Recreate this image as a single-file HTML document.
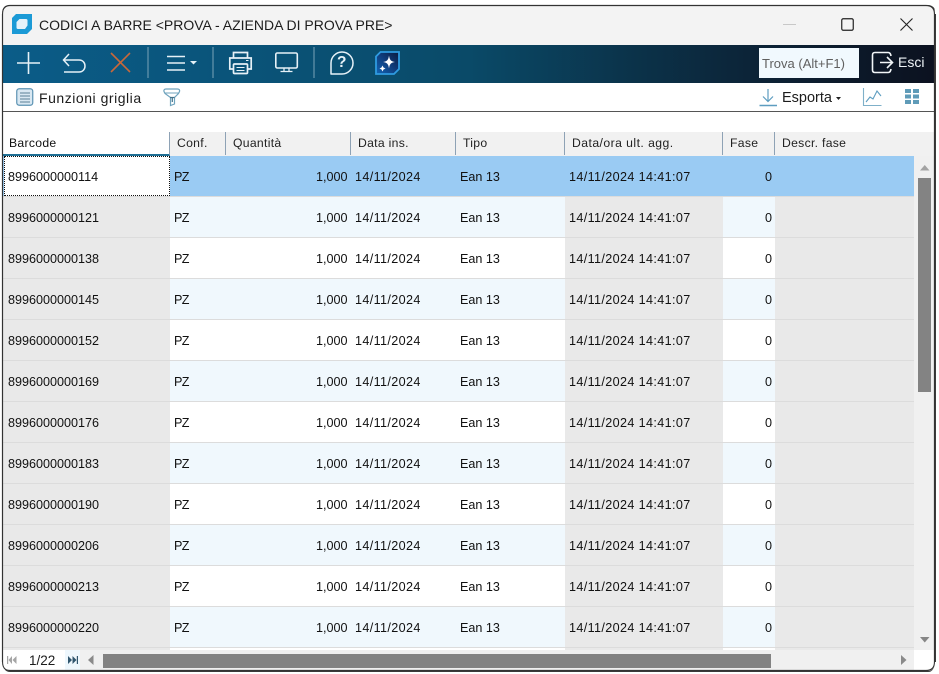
<!DOCTYPE html>
<html><head><meta charset="utf-8">
<style>
html,body{margin:0;padding:0;background:#fff}
body{width:939px;height:674px;position:relative;overflow:hidden;font-family:"Liberation Sans",sans-serif;color:#111}
.a{position:absolute}
#win{position:absolute;left:2px;top:5px;width:932px;height:665px;border:1px solid #3c3c3c;border-radius:8px;overflow:hidden;background:#fff}
.t{position:absolute;white-space:nowrap;font-size:12.6px;line-height:16px}
.r{position:absolute;left:0;width:939px;height:16px;font-size:12.6px;line-height:16px}
.r span{position:absolute;top:0;white-space:nowrap}
.c1{left:8px}.c2{left:174px;letter-spacing:-.7px}.c3{left:316px}.c4{left:355px;letter-spacing:.37px}.c5{left:460px}.c6{left:569px;letter-spacing:.37px}.c7{left:765px}
.h{position:absolute;top:132px;height:23px;background:#f1f1f1;border-right:1px solid #8ea2b5;box-sizing:border-box;font-size:12.2px;line-height:22px;padding-left:7px;color:#222;letter-spacing:.3px}
.tint{position:absolute;height:40px;background:#f0f8fd}
.ln{position:absolute;left:3px;width:911px;height:1px;background:#dcdcdc}
svg{position:absolute;overflow:visible}
</style></head><body>
<div id="win"></div>

<!-- title bar -->
<div class="a" style="left:3px;top:6px;width:931px;height:39px;background:#f3f3f3;border-radius:7px 7px 0 0"></div>
<svg style="left:12px;top:14px" width="20" height="20" viewBox="0 0 20 20"><path d="M4 0H20V15L15 20H0V4Z" fill="#1b9ad6"/><path d="M7.5 5H14Q15.500 5 15.500 6.500V11.500L13 15H6Q4.500 15 4.500 13.500V8Z" fill="#e4f2fa"/></svg>
<div class="t" style="left:39px;top:17px;font-size:14px;color:#1c1c1c">CODICI A BARRE &lt;PROVA - AZIENDA DI PROVA PRE&gt;</div>
<svg style="left:783px;top:24px" width="13" height="1"><rect width="13" height="1" fill="#c8c8c8"/></svg>
<svg style="left:841px;top:18px" width="13" height="13"><rect x=".75" y=".75" width="11.5" height="11.5" rx="1.5" fill="none" stroke="#222" stroke-width="1.2"/></svg>
<svg style="left:900px;top:18px" width="13" height="13"><path d="M.5.5L12.5 12.5M12.5.5L.5 12.5" stroke="#222" stroke-width="1.1" fill="none"/></svg>

<!-- dark toolbar -->
<div class="a" style="left:3px;top:45px;width:931px;height:38px;background:linear-gradient(90deg,#0b5c88 0%,#0a5276 30%,#0a4a68 50%,#0b3249 68%,#0c2438 80%,#0c1828 92%,#0c1220 100%)"></div>
<svg style="left:0;top:0" width="939" height="90" fill="none" stroke="#e6f1f7" stroke-width="1.5">
<path d="M28.500 52V74M17 63H40" stroke-width="1.600"/>
<path d="M69 54L63.500 60L69 66M64 60H79C87 60 87 72 79 72H64"/>
<path d="M111 53L130 72M130 53L111 72" stroke="#c9683a" stroke-width="1.600"/>
<path d="M148 47V78M213 47V78M314 47V78" stroke="#7aa3b8" stroke-width="1"/>
<path d="M167 56.500H185M167 63H185M167 70H185"/>
<path d="M190 61H197L193.500 64.500Z" fill="#e6f1f7" stroke="none"/>
<path d="M233.500 58V52.500H247.500V58M233 69H229.800V58H251.200V69H248" stroke-width="1.700"/>
<rect x="233.500" y="64" width="14" height="9.500" rx="1" stroke-width="1.700"/>
<path d="M236.500 67.500H244.500M236.500 70.500H244.500" stroke-width="1"/>
<path d="M246 60.500H248.500" stroke-width="1"/>
<rect x="275.800" y="53" width="21.500" height="15" rx="1.500" stroke-width="1.600"/>
<path d="M284 68.500V71M289 68.500V71M280.500 71.500H292.500" stroke-width="1.300"/>
<path d="M331 63A11 11 0 1 1 342 74H331Z" stroke-linejoin="round"/>
</svg>
<div class="t" style="left:337px;top:54px;font-size:15.500px;line-height:18px;font-weight:bold;color:#e6f1f7">?</div>
<svg style="left:375px;top:51px" width="25" height="24" viewBox="0 0 25 24"><defs><linearGradient id="g" x1="0" y1="1" x2="1" y2="0"><stop offset="0" stop-color="#1266b8"/><stop offset=".55" stop-color="#0f3a78"/><stop offset="1" stop-color="#0b1b3e"/></linearGradient></defs><path d="M5.500 1H24V18L19 23H1V5.500Z" fill="url(#g)" stroke="#2f9be0" stroke-width="1.800"/><path d="M14 4.500C14.600 9 16 10.500 20 11C16 11.600 14.600 13 14 17.500C13.400 13 12 11.600 8 11C12 10.500 13.400 9 14 4.500Z" fill="#fff"/><path d="M7.500 14.500L8.500 16.500L10.500 17.500L8.500 18.500L7.500 20.500L6.500 18.500L4.500 17.500L6.500 16.500Z" fill="#fff"/></svg>

<div class="a" style="left:759px;top:48px;width:100px;height:30px;background:#f1f9fe"></div>
<div class="t" style="left:762px;top:56px;font-size:13px;color:#5f5f5f">Trova (Alt+F1)</div>
<svg style="left:870px;top:50px" width="26" height="26" fill="none" stroke="#f2f6f8" stroke-width="1.600"><path d="M21 6Q20.500 2.500 18 2.500H5Q2.500 2.500 2.500 5V20Q2.500 22.500 5 22.500H18Q20.500 22.500 21 19"/><path d="M10 12.500H22.500M17 7L22.500 12.500L17 18"/></svg>
<div class="t" style="left:898px;top:54px;font-size:14px;color:#eef3f6">Esci</div>

<!-- secondary toolbar -->
<svg style="left:16px;top:88px" width="18" height="18" fill="none"><rect x=".75" y=".75" width="16" height="16.500" rx="2.500" fill="#d9e8f2" stroke="#5c93b3" stroke-width="1.200"/><path d="M4 5H14M4 8H14M4 11H14M4 14H14" stroke="#5c7f95" stroke-width="1"/></svg>
<div class="t" style="left:39px;top:90px;font-size:14px;letter-spacing:.53px;color:#1c1c1c">Funzioni griglia</div>
<svg style="left:163px;top:88px" width="18" height="18" fill="none" stroke="#6fa3bd" stroke-width="1.200"><path d="M3 1H14.500Q17 1 16.500 3.500L15.500 5.500L11.500 9.500V16L7.500 17.500V9.500L2 5.500L1 3.500Q.5 1 3 1Z"/><path d="M2 5H15.500" stroke-width="1"/><path d="M7 9.500H11.500M9.300 9.500V14" stroke="#44738c"/></svg>

<svg style="left:759px;top:88px" width="19" height="19" fill="none" stroke="#5d9dc0" stroke-width="1.200"><path d="M9 1V13M4 8.500L9 13.500L14 8.500"/><path d="M.5 17.500H18" stroke-width="1.500"/></svg>
<div class="t" style="left:782px;top:90px;font-size:14.500px;color:#1c1c1c">Esporta</div>
<svg style="left:835.500px;top:96.500px" width="5" height="3"><path d="M0 0H5L2.500 3Z" fill="#222"/></svg>
<svg style="left:863px;top:88px" width="19" height="19" fill="none" stroke="#7fb0c9" stroke-width="1.100"><path d="M.5 0V17.500H18.500"/><path d="M3 14L7 9L10 11L14 3L18 8" stroke="#5d9dc0"/></svg>
<svg style="left:905px;top:89px" width="14" height="15"><g fill="#5f9bb8"><rect width="6" height="4"/><rect x="8" width="6" height="4"/><rect y="5.500" width="6" height="4"/><rect x="8" y="5.500" width="6" height="4"/><rect y="11" width="6" height="4"/><rect x="8" y="11" width="6" height="4"/></g></svg>

<div class="a" style="left:3px;top:111px;width:931px;height:1px;background:#555"></div>

<!-- grid background columns -->
<div class="a" style="left:3px;top:156px;width:167px;height:494px;background:#e9e9e9"></div>
<div class="a" style="left:565px;top:156px;width:158px;height:494px;background:#e9e9e9"></div>
<div class="a" style="left:775px;top:156px;width:139px;height:494px;background:#e9e9e9"></div>

<!-- alternate row tint -->
<div class="tint" style="left:170px;top:197px;width:395px"></div><div class="tint" style="left:723px;top:197px;width:52px"></div>
<div class="tint" style="left:170px;top:279px;width:395px"></div><div class="tint" style="left:723px;top:279px;width:52px"></div>
<div class="tint" style="left:170px;top:361px;width:395px"></div><div class="tint" style="left:723px;top:361px;width:52px"></div>
<div class="tint" style="left:170px;top:443px;width:395px"></div><div class="tint" style="left:723px;top:443px;width:52px"></div>
<div class="tint" style="left:170px;top:525px;width:395px"></div><div class="tint" style="left:723px;top:525px;width:52px"></div>
<div class="tint" style="left:170px;top:607px;width:395px"></div><div class="tint" style="left:723px;top:607px;width:52px"></div>

<!-- row lines -->
<div class="ln" style="top:196px"></div><div class="ln" style="top:237px"></div><div class="ln" style="top:278px"></div><div class="ln" style="top:319px"></div>
<div class="ln" style="top:360px"></div><div class="ln" style="top:401px"></div><div class="ln" style="top:442px"></div><div class="ln" style="top:483px"></div>
<div class="ln" style="top:524px"></div><div class="ln" style="top:565px"></div><div class="ln" style="top:606px"></div><div class="ln" style="top:647px"></div>

<!-- selected row -->
<div class="a" style="left:3px;top:156px;width:911px;height:40px;background:#9acbf3"></div>
<div class="a" style="left:4px;top:156px;width:166px;height:40px;background:#fff;box-sizing:border-box;border:1px dotted #111"></div>

<!-- header -->
<div class="a" style="left:3px;top:132px;width:931px;height:24px;background:#f1f1f1"></div>
<div class="h" style="left:3px;width:167px;background:#fff;padding-left:6px;border-bottom:2px solid #1f6f94;height:24px;color:#111">Barcode</div>
<div class="h" style="left:170px;width:56px">Conf.</div>
<div class="h" style="left:226px;width:125px">Quantità</div>
<div class="h" style="left:351px;width:105px">Data ins.</div>
<div class="h" style="left:456px;width:109px">Tipo</div>
<div class="h" style="left:565px;width:158px;letter-spacing:.45px">Data/ora ult. agg.</div>
<div class="h" style="left:723px;width:52px">Fase</div>
<div class="h" style="left:775px;width:159px;border-right:0">Descr. fase</div>

<!-- rows -->
<div class="r" style="top:169px"><span class="c1">8996000000114</span><span class="c2">PZ</span><span class="c3">1,000</span><span class="c4">14/11/2024</span><span class="c5">Ean 13</span><span class="c6">14/11/2024 14:41:07</span><span class="c7">0</span></div>
<div class="r" style="top:210px"><span class="c1">8996000000121</span><span class="c2">PZ</span><span class="c3">1,000</span><span class="c4">14/11/2024</span><span class="c5">Ean 13</span><span class="c6">14/11/2024 14:41:07</span><span class="c7">0</span></div>
<div class="r" style="top:251px"><span class="c1">8996000000138</span><span class="c2">PZ</span><span class="c3">1,000</span><span class="c4">14/11/2024</span><span class="c5">Ean 13</span><span class="c6">14/11/2024 14:41:07</span><span class="c7">0</span></div>
<div class="r" style="top:292px"><span class="c1">8996000000145</span><span class="c2">PZ</span><span class="c3">1,000</span><span class="c4">14/11/2024</span><span class="c5">Ean 13</span><span class="c6">14/11/2024 14:41:07</span><span class="c7">0</span></div>
<div class="r" style="top:333px"><span class="c1">8996000000152</span><span class="c2">PZ</span><span class="c3">1,000</span><span class="c4">14/11/2024</span><span class="c5">Ean 13</span><span class="c6">14/11/2024 14:41:07</span><span class="c7">0</span></div>
<div class="r" style="top:374px"><span class="c1">8996000000169</span><span class="c2">PZ</span><span class="c3">1,000</span><span class="c4">14/11/2024</span><span class="c5">Ean 13</span><span class="c6">14/11/2024 14:41:07</span><span class="c7">0</span></div>
<div class="r" style="top:415px"><span class="c1">8996000000176</span><span class="c2">PZ</span><span class="c3">1,000</span><span class="c4">14/11/2024</span><span class="c5">Ean 13</span><span class="c6">14/11/2024 14:41:07</span><span class="c7">0</span></div>
<div class="r" style="top:456px"><span class="c1">8996000000183</span><span class="c2">PZ</span><span class="c3">1,000</span><span class="c4">14/11/2024</span><span class="c5">Ean 13</span><span class="c6">14/11/2024 14:41:07</span><span class="c7">0</span></div>
<div class="r" style="top:497px"><span class="c1">8996000000190</span><span class="c2">PZ</span><span class="c3">1,000</span><span class="c4">14/11/2024</span><span class="c5">Ean 13</span><span class="c6">14/11/2024 14:41:07</span><span class="c7">0</span></div>
<div class="r" style="top:538px"><span class="c1">8996000000206</span><span class="c2">PZ</span><span class="c3">1,000</span><span class="c4">14/11/2024</span><span class="c5">Ean 13</span><span class="c6">14/11/2024 14:41:07</span><span class="c7">0</span></div>
<div class="r" style="top:579px"><span class="c1">8996000000213</span><span class="c2">PZ</span><span class="c3">1,000</span><span class="c4">14/11/2024</span><span class="c5">Ean 13</span><span class="c6">14/11/2024 14:41:07</span><span class="c7">0</span></div>
<div class="r" style="top:620px"><span class="c1">8996000000220</span><span class="c2">PZ</span><span class="c3">1,000</span><span class="c4">14/11/2024</span><span class="c5">Ean 13</span><span class="c6">14/11/2024 14:41:07</span><span class="c7">0</span></div>

<!-- vertical scrollbar -->
<div class="a" style="left:914px;top:156px;width:20px;height:494px;background:#f0f0f0"></div>
<div class="a" style="left:918px;top:178px;width:13px;height:214px;background:#838383"></div>
<svg style="left:920px;top:165px" width="10" height="6"><path d="M0 5.500H9.500L4.750 0Z" fill="#a3a3a3"/></svg>
<svg style="left:920px;top:637px" width="10" height="6"><path d="M0 0H9.500L4.750 5.500Z" fill="#868686"/></svg>

<!-- bottom bar -->
<div class="a" style="left:3px;top:650px;width:911px;height:20px;background:#f0f0f0"></div>
<div class="a" style="left:3px;top:650px;width:62px;height:20px;background:#fff"></div>
<div class="a" style="left:65px;top:650px;width:15px;height:20px;background:#eef7fd"></div>
<svg style="left:7px;top:656px" width="10" height="8"><path d="M0 0H1.200V8H0ZM5 0V8L1.500 4ZM9.500 0V8L5.500 4Z" fill="#a5a5a5"/></svg>
<div class="t" style="left:29px;top:653px;font-size:13.500px;color:#1c1c1c">1/22</div>
<svg style="left:68px;top:656px" width="10" height="8"><path d="M0 0V8L4 4ZM4.500 0V8L8.500 4ZM8.800 0H10V8H8.800Z" fill="#30566e"/></svg>
<svg style="left:88px;top:655px" width="6" height="10"><path d="M5.500 0V10L0 5Z" fill="#8a8a8a"/></svg>
<div class="a" style="left:103px;top:654px;width:668px;height:14px;background:#838383"></div>
<svg style="left:901px;top:655px" width="6" height="10"><path d="M0 0V10L5.500 5Z" fill="#8a8a8a"/></svg>

<!-- window frame on top -->
<svg style="left:0;top:0" width="939" height="674" fill="none"><path d="M10 5.500H926Q934.500 5.500 934.500 14V662Q934.500 670.500 926 670.500H10Q2.500 670.500 2.500 662V14Q2.500 5.500 10 5.500Z" stroke="#333" stroke-width="1.200"/><path d="M0 14V0H14Q2 1 2 14ZM939 14V0H925Q935 1 935 14ZM0 662V674H14Q2 672 2 662ZM939 662V674H925Q935 672 935 662Z" fill="#fff"/></svg>
</body></html>
